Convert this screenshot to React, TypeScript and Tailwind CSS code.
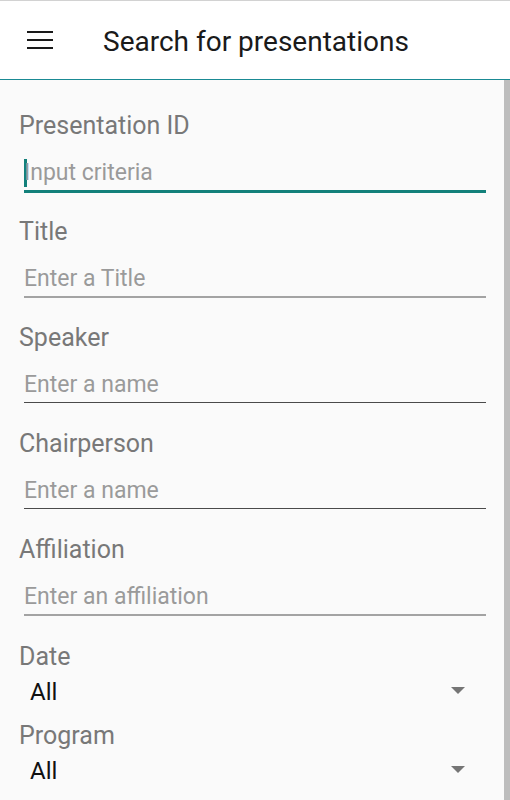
import React from "react";

const font = { fontFamily: "Roboto, 'Noto Sans', sans-serif" };

function Field({
  label,
  placeholder,
  variant,
}: {
  label: string;
  placeholder: string;
  variant: "focus" | "light" | "dark";
}) {
  const line =
    variant === "focus"
      ? "h-[3px] bg-[#12807a]"
      : variant === "light"
      ? "h-[2px] bg-[#a3a3a3]"
      : "h-[1px] bg-[#4a4a4a]";
  return (
    <div className="flex flex-col">
      <div className="h-[28px] text-[25px] leading-[28px] text-[#787878]">{label}</div>
      <div className="mt-[20px] ml-[5px] mr-[18px] flex flex-col">
        <div className="flex items-center pb-[4px]">
          {variant === "focus" && <div className="w-[3px] h-[28px] -my-[1px] bg-[#12807a] -mr-[3px]" />}
          <div className="h-[26px] text-[23px] leading-[26px] text-[#9a9a9a]">{placeholder}</div>
        </div>
        <div className="h-[3px]">
          <div className={line} />
        </div>
      </div>
    </div>
  );
}

function Select({ label }: { label: string }) {
  return (
    <div className="flex flex-col">
      <div className="h-[28px] text-[25px] leading-[28px] text-[#787878]">{label}</div>
      <div className="mt-[7px] flex items-center justify-between pl-[11px] pr-[39px]">
        <div className="h-[28px] text-[24px] leading-[28px] text-[#111]">All</div>
        <svg width="14" height="7" viewBox="0 0 14 7" className="mt-[-3px]">
          <path d="M0 0 L14 0 L7 7 Z" fill="#757575" />
        </svg>
      </div>
    </div>
  );
}

export default function App() {
  return (
    <div className="w-[510px] h-[800px] overflow-hidden bg-[#fafafa] flex flex-col" style={font}>
      <header className="h-[80px] shrink-0 bg-white flex flex-col">
        <div className="h-[1px] bg-[#d2d2d2]" />
        <div className="flex-1 flex items-center">
          <div className="ml-[27px] flex flex-col gap-[6px]">
            <div className="w-[26px] h-[2px] bg-[#1a1a1a]" />
            <div className="w-[26px] h-[2px] bg-[#1a1a1a]" />
            <div className="w-[26px] h-[2px] bg-[#1a1a1a]" />
          </div>
          <div className="ml-[50px] mt-[3px] text-[28px] leading-[32px] text-[#1a1a1a]">Search for presentations</div>
        </div>
        <div className="h-[1px] bg-[#1a8a94]" />
      </header>
      <div className="flex flex-1 min-h-0">
        <main className="flex-1 pl-[19px] pt-[32px] flex flex-col">
          <div className="flex flex-col gap-[25px]">
            <Field label="Presentation ID" placeholder="Input criteria" variant="focus" />
            <Field label="Title" placeholder="Enter a Title" variant="light" />
            <Field label="Speaker" placeholder="Enter a name" variant="dark" />
            <Field label="Chairperson" placeholder="Enter a name" variant="dark" />
            <Field label="Affiliation" placeholder="Enter an affiliation" variant="light" />
          </div>
          <div className="mt-[26px] flex flex-col gap-[16px]">
            <Select label="Date" />
            <Select label="Program" />
          </div>
        </main>
        <div className="w-[6px] bg-[#bdbdbd]" />
      </div>
    </div>
  );
}
